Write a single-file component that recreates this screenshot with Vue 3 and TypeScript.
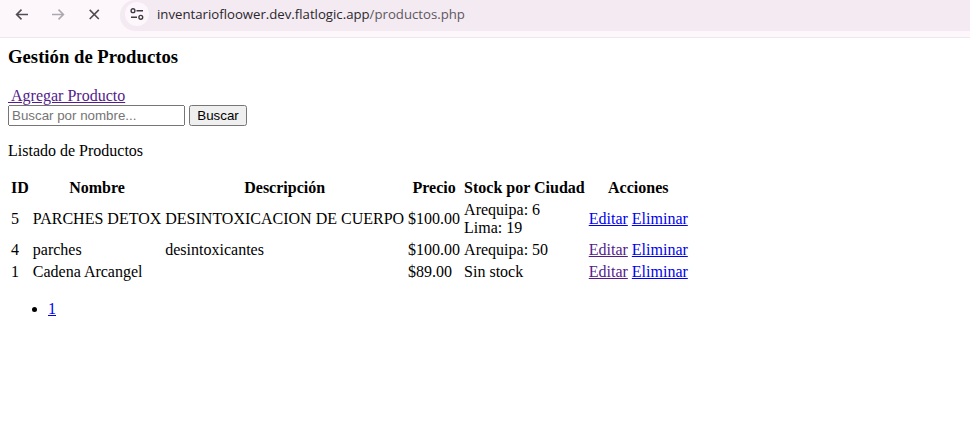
<template>
    <div class="browser">
        <header class="toolbar">
            <button class="nav-btn" aria-label="Atrás">
                <svg width="16" height="16" viewBox="0 0 16 16"><path d="M14 7.5H3M7.5 2.6 2.6 7.5 7.5 12.4" fill="none" stroke="#514d52" stroke-width="1.6" /></svg>
            </button>
            <button class="nav-btn" aria-label="Adelante">
                <svg width="16" height="16" viewBox="0 0 16 16"><path d="M2 7.5H13M8.5 2.6 13.4 7.5 8.5 12.4" fill="none" stroke="#aca8ad" stroke-width="1.6" /></svg>
            </button>
            <button class="nav-btn" aria-label="Detener">
                <svg width="16" height="16" viewBox="0 0 16 16"><path d="M3.7 2.9 12.8 12M12.8 2.9 3.7 12" fill="none" stroke="#514d52" stroke-width="1.6" /></svg>
            </button>
            <div class="omnibox">
                <span class="site-info">
                    <svg width="16" height="16" viewBox="0 0 16 16" fill="none" stroke="#3f3b40" stroke-width="1.4">
                        <circle cx="4" cy="4.7" r="1.9" />
                        <path d="M7.5 4.7h6.5M2 11.3h6" />
                        <circle cx="11.8" cy="11.3" r="1.9" />
                    </svg>
                </span>
                <span class="url">inventariofloower.dev.flatlogic.app<span class="url-path">/productos.php</span></span>
            </div>
        </header>

        <main class="page">
            <h3>Gestión de Productos</h3>
            <a href="#" class="visited"><span class="lead">&nbsp;</span>Agregar Producto</a>
            <form class="search" @submit.prevent>
                <input type="text" placeholder="Buscar por nombre...">
                <button type="submit">Buscar</button>
            </form>
            <p>Listado de Productos</p>
            <table>
                <thead>
                    <tr>
                        <th>ID</th>
                        <th>Nombre</th>
                        <th>Descripción</th>
                        <th>Precio</th>
                        <th>Stock por Ciudad</th>
                        <th>Acciones</th>
                    </tr>
                </thead>
                <tbody>
                    <tr v-for="p in productos" :key="p.id">
                        <td>{{ p.id }}</td>
                        <td>{{ p.nombre }}</td>
                        <td>{{ p.descripcion }}</td>
                        <td>{{ p.precio }}</td>
                        <td>
                            <div v-for="s in p.stock" :key="s">{{ s }}</div>
                        </td>
                        <td>
                            <a href="#" :class="{ visited: p.editVisited }">Editar</a>
                            {{ ' ' }}
                            <a href="#">Eliminar</a>
                        </td>
                    </tr>
                </tbody>
            </table>
            <ul>
                <li><a href="#">1</a></li>
            </ul>
        </main>
    </div>
</template>

<script setup lang="ts">
interface Producto {
    id: number
    nombre: string
    descripcion: string
    precio: string
    stock: string[]
    editVisited: boolean
}

const productos: Producto[] = [
    { id: 5, nombre: 'PARCHES DETOX', descripcion: 'DESINTOXICACION DE CUERPO', precio: '$100.00', stock: ['Arequipa: 6', 'Lima: 19'], editVisited: false },
    { id: 4, nombre: 'parches', descripcion: 'desintoxicantes', precio: '$100.00', stock: ['Arequipa: 50'], editVisited: true },
    { id: 1, nombre: 'Cadena Arcangel', descripcion: '', precio: '$89.00', stock: ['Sin stock'], editVisited: true },
]
</script>

<style>
body {
    background: #fff;
}
</style>

<style scoped>
.browser {
    font-family: "Liberation Serif", serif;
    font-size: 16px;
    color: #000;
}

.toolbar {
    display: flex;
    align-items: flex-start;
    height: 38px;
    padding: 7px 0 0 14px;
    box-sizing: border-box;
    background: #fdf7fc;
    border-bottom: 1px solid #f0e6ee;
}

.nav-btn {
    display: flex;
    width: 16px;
    height: 16px;
    margin-right: 20px;
    padding: 0;
    border: 0;
    background: none;
}

.omnibox {
    display: flex;
    align-items: center;
    flex: 1;
    height: 31px;
    margin: -7px 0 0 -2px;
    padding: 0 0 3px 5px;
    box-sizing: border-box;
    border-radius: 15px 0 0 15px;
    background: #f3eaf2;
    font-family: "Open Sans", sans-serif;
    font-size: 13.2px;
}

.site-info {
    display: flex;
    align-items: center;
    justify-content: center;
    width: 24px;
    height: 24px;
    margin-right: 8px;
    border-radius: 50%;
    background: #fdf7fc;
}

.url {
    color: #2b272c;
    white-space: nowrap;
}

.url-path {
    color: #5d585e;
}

.page {
    padding: 8px;
}

h3 {
    margin: 0 0 19px;
    font-size: 18.72px;
}

a {
    color: #0000ee;
}

a.visited {
    color: #551a8b;
}

.lead {
    letter-spacing: -1px;
}

.search {
    display: block;
}

.search input {
    width: 177px;
    box-sizing: border-box;
    font-family: "Liberation Sans", sans-serif;
    font-size: 13.33px;
}

.search button {
    width: 58px;
    margin-left: 4px;
    font-family: "Liberation Sans", sans-serif;
    font-size: 13.33px;
}

p {
    margin: 16px 0;
}

ul {
    margin: 16px 0;
    padding-left: 40px;
}
</style>
